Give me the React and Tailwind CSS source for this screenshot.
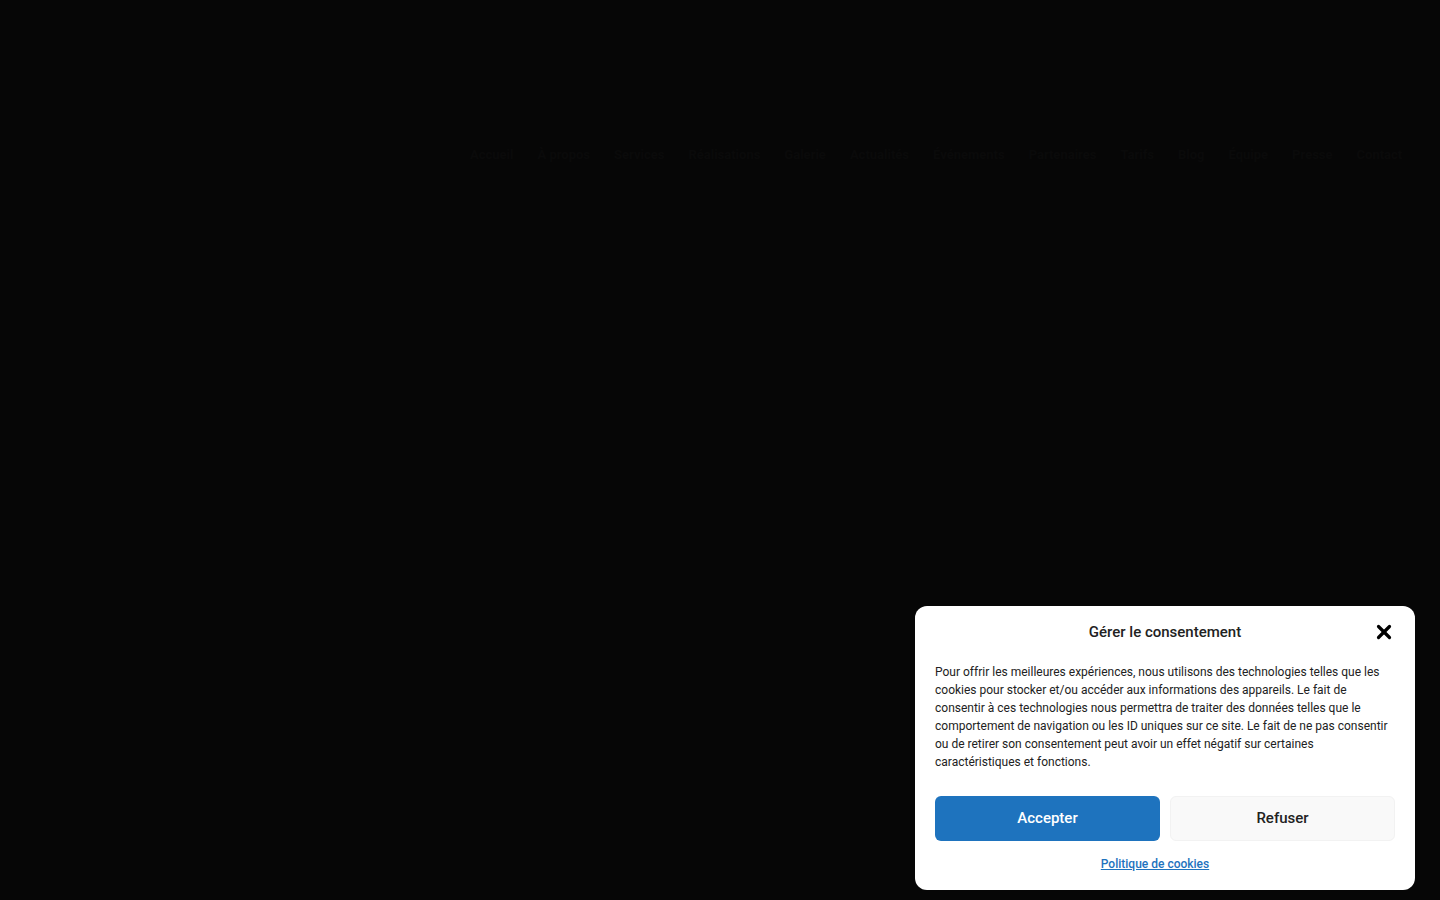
import React from 'react';
import { X } from 'lucide-react';

const navItems = [
  'Accueil', 'À propos', 'Services', 'Réalisations', 'Galerie', 'Actualités', 'Événements',
  'Partenaires', 'Tarifs', 'Blog', 'Équipe', 'Presse', 'Contact',
];

const App = () => {
  return (
    <div
      className="h-screen overflow-y-scroll bg-[#060606] [&::-webkit-scrollbar]:w-[15px] [&::-webkit-scrollbar-track]:bg-[#f1f1f1] [&::-webkit-scrollbar-thumb]:rounded-full [&::-webkit-scrollbar-thumb]:border-[3px] [&::-webkit-scrollbar-thumb]:border-solid [&::-webkit-scrollbar-thumb]:border-[#f1f1f1] [&::-webkit-scrollbar-thumb]:bg-[#8c8c8c]"
      style={{ fontFamily: 'Roboto, "Liberation Sans", sans-serif' }}
    >
      <div className="min-h-[6000px]">
        <nav className="flex gap-6 pl-[470px] pt-[145px] whitespace-nowrap text-[13px] font-bold text-[#0a0a0a]">
          {navItems.map((item) => (
            <span key={item}>{item}</span>
          ))}
        </nav>
      </div>

      <div className="fixed right-[25px] bottom-[10px] w-[500px] rounded-xl bg-white px-5 pt-3 pb-[17px] text-[#222]">
        <div className="relative flex h-7 items-center justify-center">
          <h2 className="text-[15px] font-medium text-[#222]">Gérer le consentement</h2>
          <button className="absolute right-0 top-[3px] flex h-[22px] w-[22px] items-center justify-center text-black">
            <X size={22} strokeWidth={3.5} />
          </button>
        </div>
        <p className="mt-[17px] text-[12px] leading-[18px] text-[#222]">
          Pour offrir les meilleures expériences, nous utilisons des technologies telles que les cookies pour stocker
          et/ou accéder aux informations des appareils. Le fait de consentir à ces technologies nous permettra de
          traiter des données telles que le comportement de navigation ou les ID uniques sur ce site. Le fait de ne pas
          consentir ou de retirer son consentement peut avoir un effet négatif sur certaines caractéristiques et
          fonctions.
        </p>
        <div className="mt-[25px] grid grid-cols-2 gap-[10px]">
          <button className="h-[45px] rounded-md bg-[#1e73be] text-[15px] font-medium text-white">Accepter</button>
          <button className="h-[45px] rounded-md border border-[#f2f2f2] bg-[#f9f9f9] text-[15px] font-medium text-[#222]">
            Refuser
          </button>
        </div>
        <div className="mt-[14px] flex justify-center pr-5">
          <a href="#" className="text-[12px] leading-[18px] font-medium text-[#1e73be] underline">
            Politique de cookies
          </a>
        </div>
      </div>
    </div>
  );
};

export default App;
